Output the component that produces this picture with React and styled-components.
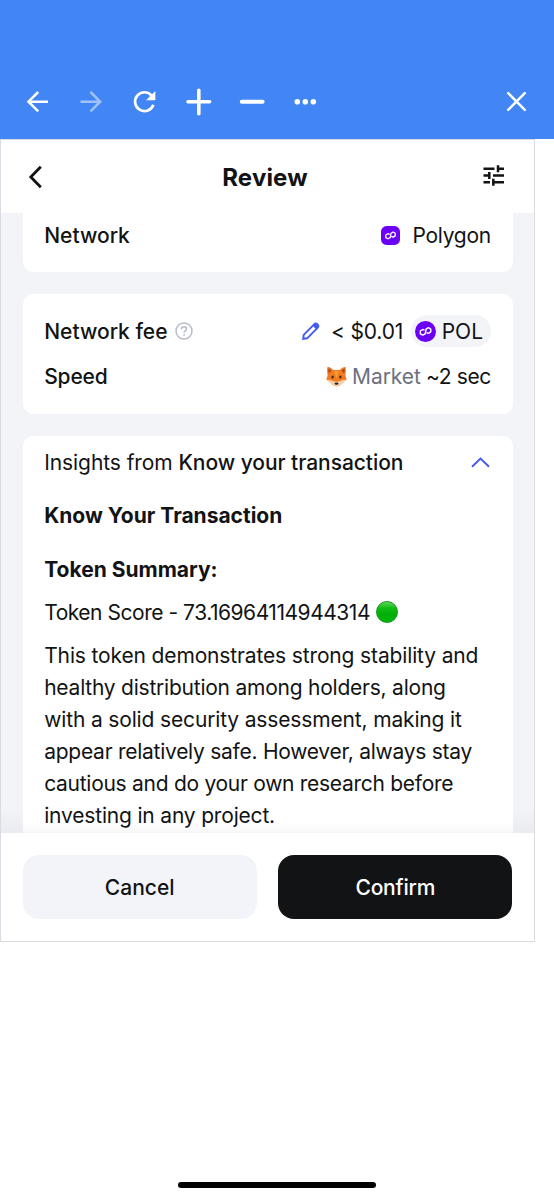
import React from 'react';
import styled, { createGlobalStyle } from 'styled-components';

const GlobalStyle = createGlobalStyle`
    body {
        margin: 0;
        background: #ffffff;
        color: #121314;
        font-family: Inter, "Liberation Sans", sans-serif;
        font-size: 21px;
    }
    * {
        box-sizing: border-box;
    }
`;

const Page = styled.div`
    display: flex;
    flex-direction: column;
    width: 554px;
    height: 1199px;
    overflow: hidden;
`;

const Toolbar = styled.header`
    display: flex;
    align-items: flex-end;
    justify-content: space-between;
    flex: none;
    height: 139px;
    padding: 0 23px 22px;
    background: #4285f4;
`;

const ToolGroup = styled.div`
    display: flex;
    gap: 23.5px;
`;

const ToolButton = styled.button`
    display: flex;
    width: 30px;
    height: 30px;
    padding: 0;
    border: 0;
    background: none;
    color: #ffffff;
    opacity: ${props => props.$dim ? 0.5 : 1};
`;

const Frame = styled.main`
    display: flex;
    flex-direction: column;
    flex: none;
    width: 535px;
    height: 803px;
    border: 1px solid #d9dae2;
    background: #ffffff;
`;

const Header = styled.div`
    display: grid;
    grid-template-columns: 28px 1fr 28px;
    align-items: center;
    flex: none;
    height: 73px;
    padding: 0 27px 1px 20px;
`;

const Title = styled.h1`
    margin: 2px 0 0;
    padding-left: 2px;
    font-size: 24px;
    font-weight: 700;
    letter-spacing: ${props => props.$track || 0}px;
    text-align: center;
`;

const Content = styled.div`
    display: flex;
    flex-direction: column;
    gap: 22px;
    flex: 1;
    min-height: 0;
    padding: 0 21.5px 0 21.7px;
    overflow: hidden;
    background: linear-gradient(#f3f4f8 96%, #eaebf0);
`;

const Card = styled.section`
    flex: none;
    padding: ${props => props.$pad};
    border-radius: ${props => props.$cut ? '0 0 10px 10px' : '10px'};
    background: #ffffff;
`;

const InsightsCard = styled(Card)`
    height: 420px;
    background: linear-gradient(#ffffff 92%, #f5f5f6 95%);
`;

const Row = styled.div`
    display: flex;
    align-items: center;
    justify-content: space-between;
    height: ${props => props.$height}px;
`;

const Group = styled.div`
    display: flex;
    align-items: center;
    gap: ${props => props.$gap}px;
`;

const Text = styled.span`
    color: ${props => props.$muted ? '#6d7080' : 'inherit'};
    font-weight: ${props => props.$weight || 400};
    letter-spacing: ${props => props.$track || 0}px;
    white-space: nowrap;
`;

const Pill = styled.div`
    display: flex;
    align-items: center;
    gap: 6px;
    height: 32px;
    margin-left: 3px;
    padding: 0 8px 0 3.5px;
    border-radius: 16px;
    background: #f3f4f8;
`;

const Heading = styled.h2`
    margin: 0;
    font-size: 21px;
    font-weight: 700;
    line-height: 32px;
    letter-spacing: ${props => props.$track || 0}px;
    margin-top: ${props => props.$top}px;
`;

const Score = styled.div`
    display: flex;
    align-items: center;
    gap: 6px;
    height: 32px;
    margin-top: 10px;
`;

const StatusDot = styled.i`
    width: 22px;
    height: 22px;
    border: 1px solid #17961d;
    border-radius: 50%;
    background: linear-gradient(#5fd75c 0%, #12bd12 30%, #02ae08 60%, #03b60a 100%);
`;

const Paragraph = styled.p`
    margin: 12px 0 0;
    line-height: 32px;
`;

const Line = styled(Text)`
    display: block;
`;

const Footer = styled.div`
    display: flex;
    gap: 21.5px;
    flex: none;
    height: 108px;
    padding: 22px 21.7px;
`;

const Button = styled.button`
    flex: 1;
    height: 64px;
    padding: 0;
    border: 0;
    border-radius: 16px;
    background: ${props => props.$primary ? '#121314' : '#f3f4fa'};
    color: ${props => props.$primary ? '#ffffff' : '#121314'};
    font: inherit;
    font-weight: 500;
    letter-spacing: ${props => props.$track || 0}px;
`;

const HomeIndicator = styled.div`
    width: 198px;
    height: 6px;
    margin: auto auto 11px 178px;
    border-radius: 3px;
    background: #000000;
`;

const Stroke = ({ size = 30, color = 'currentColor', width = 2.6, cap = 'butt', children }) => (
    <svg width={size} height={size} viewBox={`0 0 ${size} ${size}`} fill="none" stroke={color} strokeWidth={width} strokeLinecap={cap}>
        {children}
    </svg>
);

const PolygonLogo = ({ size, square }) => (
    <svg width={size} height={size} viewBox="0 0 22 22">
        <rect width="22" height="22" rx={square ? 6.5 : 11} fill="#6c00f6" />
        <path
            d="M10 9.6 8.1 8.9 5.6 10.4v3l2.5 1.4 2.6-1.4.9-5 2.4-1.4 2.5 1.4v3L14 12.9l-2-.8"
            fill="none"
            stroke="#ffffff"
            strokeWidth="1.5"
            strokeLinejoin="round"
        />
    </svg>
);

const Fox = () => (
    <svg width="21" height="21" viewBox="0 0 21 21">
        <path d="M1.5.8Q5 1.4 7.3 4h6.4Q16 1.4 19.5.8q.9 4.2-.2 8.2l1.4 4.6-3.8 3.2-3.2 2.8q-3.2 1.6-6.4 0l-3.2-2.8L.3 13.6 1.7 9Q.6 5 1.5.8Z" fill="#f47b20" />
        <path d="M2.4 2.4Q4.5 3 5.6 4.8L2.9 7.2Q2 5.2 2.4 2.4ZM18.6 2.4Q16.5 3 15.4 4.8l2.7 2.4Q19 5.2 18.6 2.4Z" fill="#a34b22" />
        <path d="M.4 13.8q4-.2 7.7 1.6l2.4.4 2.4-.4q3.7-1.8 7.7-1.6l-3.7 3-3.2 2.8q-3.2 1.6-6.4 0l-3.2-2.8Z" fill="#f3d3ae" />
        <path d="m8.3 5 2.2 7.5L12.7 5Z" fill="#ff9d35" />
        <ellipse cx="6.6" cy="11" rx="1.1" ry="1.5" fill="#33231d" />
        <ellipse cx="14.4" cy="11" rx="1.1" ry="1.5" fill="#33231d" />
        <ellipse cx="10.5" cy="17.6" rx="2" ry="1.2" fill="#2c2523" />
    </svg>
);

const BrowserBar = () => (
    <Toolbar>
        <ToolGroup>
            <ToolButton aria-label="Back">
                <Stroke width={2.5}><path d="M25 14.7H5.5M15.2 5 5.5 14.7l9.7 9.7" /></Stroke>
            </ToolButton>
            <ToolButton aria-label="Forward" $dim>
                <Stroke width={2.5}><path d="M3.5 14.7H23M13.5 5l9.7 9.7-9.7 9.7" /></Stroke>
            </ToolButton>
            <ToolButton aria-label="Reload">
                <Stroke width={2.7}>
                    <path d="M23.4 17.7a9.4 9.4 0 1 1-1.7-9.1" />
                    <path d="M25.3 4v9.3H16Z" fill="currentColor" stroke="none" />
                </Stroke>
            </ToolButton>
            <ToolButton aria-label="Zoom in">
                <Stroke width={3.6} cap="round"><path d="M14.8 3.3v23.4M4 14.8h21.6" /></Stroke>
            </ToolButton>
            <ToolButton aria-label="Zoom out">
                <Stroke width={4} cap="round"><path d="M4.8 14.8h20.8" /></Stroke>
            </ToolButton>
            <ToolButton aria-label="More">
                <Stroke>
                    <g fill="currentColor" stroke="none">
                        <circle cx="6.3" cy="14.7" r="2.8" />
                        <circle cx="14.3" cy="14.7" r="2.8" />
                        <circle cx="22.3" cy="14.7" r="2.8" />
                    </g>
                </Stroke>
            </ToolButton>
        </ToolGroup>
        <ToolButton aria-label="Close">
            <Stroke width={2.5} cap="round"><path d="m7.2 6.2 16.6 16.6M23.8 6.2 7.2 22.8" /></Stroke>
        </ToolButton>
    </Toolbar>
);

const summary = [
    { text: 'This token demonstrates strong stability and', track: -0.14 },
    { text: 'healthy distribution among holders, along', track: -0.23 },
    { text: 'with a solid security assessment, making it', track: -0.15 },
    { text: 'appear relatively safe. However, always stay', track: -0.26 },
    { text: 'cautious and do your own research before', track: -0.28 },
    { text: 'investing in any project.', track: -0.18 },
];

export default function App() {
    return <>
        <GlobalStyle />
        <Page>
            <BrowserBar />
            <Frame>
                <Header>
                    <Stroke size={28} width={2.8}><path d="M19.8 4.7 9.8 15l10 10.3" /></Stroke>
                    <Title $track={0.15}>Review</Title>
                    <Stroke size={28} width={2.5}>
                        <path d="M4.5 6.8h11M19 3.3v7M19 6.8h6M4.5 13.5h6M10.3 10v7M14 13.5h11M4.5 20.2h6.5M14.3 16.7v7M14.3 20.2H25" />
                    </Stroke>
                </Header>
                <Content>
                    <Card $cut $pad="6px 21.5px 21px">
                        <Row $height={32}>
                            <Text $weight={500}>Network</Text>
                            <Group $gap={12}>
                                <PolygonLogo size={19} square />
                                <Text $track={-0.25}>Polygon</Text>
                            </Group>
                        </Row>
                    </Card>
                    <Card $pad="14px 21.5px 15px">
                        <Row $height={46}>
                            <Group $gap={7}>
                                <Text $weight={500}>Network fee</Text>
                                <Stroke size={18} width={1.5} color="#b9bcc8">
                                    <circle cx="9" cy="9" r="8" />
                                    <path d="M6.5 7.2c0-3.5 5.1-3.2 5.1-.3 0 1.8-2.5 1.8-2.5 3.8M9.1 12v1.7" />
                                </Stroke>
                            </Group>
                            <Group $gap={5}>
                                <Stroke size={28} width={1.9} color="#4459ef">
                                    <path d="m5.2 21.8.5-3.9L16.1 7.4q1.7-1.7 3.4 0t0 3.4L9.1 21.3Z" />
                                    <path d="m16 7.6 3.4 3.4" strokeWidth="3.6" />
                                </Stroke>
                                <Text $track={-0.15}>&lt; $0.01</Text>
                                <Pill>
                                    <PolygonLogo size={21} />
                                    <Text>POL</Text>
                                </Pill>
                            </Group>
                        </Row>
                        <Row $height={45}>
                            <Text $weight={500} $track={-0.15}>Speed</Text>
                            <Group $gap={5}>
                                <Fox />
                                <Text $muted $track={-0.05}>Market</Text>
                                <Text $track={-0.35}>~2 sec</Text>
                            </Group>
                        </Row>
                    </Card>
                    <InsightsCard $pad="10px 21.5px 0">
                        <Row $height={32}>
                            <Text $track={-0.08}>Insights from <Text $weight={500} $track={-0.05}>Know your transaction</Text></Text>
                            <Stroke size={21} width={1.9} color="#4459ef"><path d="m2 14.8 8.5-8.2 8.5 8.2" /></Stroke>
                        </Row>
                        <Heading $top={22}>Know Your Transaction</Heading>
                        <Heading $top={22}>Token Summary:</Heading>
                        <Score>
                            <Text $track={-0.47}>Token Score - 73.16964114944314</Text>
                            <StatusDot />
                        </Score>
                        <Paragraph>
                            {summary.map(line => <Line key={line.text} $track={line.track}>{line.text}</Line>)}
                        </Paragraph>
                    </InsightsCard>
                </Content>
                <Footer>
                    <Button>Cancel</Button>
                    <Button $primary $track={-0.2}>Confirm</Button>
                </Footer>
            </Frame>
            <HomeIndicator />
        </Page>
    </>;
}
